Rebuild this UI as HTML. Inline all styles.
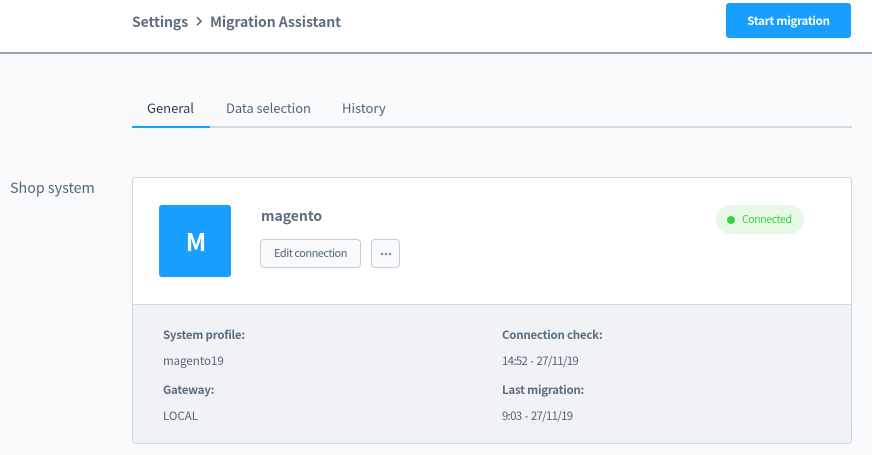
<!DOCTYPE html>
<html lang="en">
<head>
<meta charset="utf-8">
<title>Migration Assistant</title>
<style>
html,body{margin:0;padding:0;width:872px;height:455px;overflow:hidden;background:#f9fafb;}
body{position:relative;font-family:"Noto Sans CJK JP","Liberation Sans",sans-serif;color:#52667a;}
div,span{position:absolute;box-sizing:border-box;white-space:nowrap;}
.t{line-height:20px;height:20px;}
.b{font-weight:700;color:#5b6d80;}
.k{font-size:11.5px;font-weight:700;color:#5b6d80;letter-spacing:-.24px;}
.v{font-size:11.5px;font-weight:400;color:#52667a;}
</style>
</head>
<body>
<div style="left:0;top:0;width:872px;height:54px;background:#fff;border-bottom:2px solid #9aa6b3;"></div>
<div class="t b" style="left:132px;top:12px;font-size:14px;letter-spacing:-.08px;">Settings</div>
<svg style="position:absolute;left:195px;top:16px" width="8" height="11" viewBox="0 0 8 11"><path d="M2 1.2 L6 5.2 L2 9.2" fill="none" stroke="#52667a" stroke-width="1.5"/></svg>
<div class="t b" style="left:210px;top:12px;font-size:14px;letter-spacing:-.05px;">Migration Assistant</div>
<div style="left:726px;top:3px;width:125px;height:35px;background:#189eff;border-radius:3px;"></div>
<div class="t b" style="left:726px;top:11px;width:125px;text-align:center;font-size:11.5px;color:#fff;letter-spacing:-.25px;">Start migration</div>

<div class="t" style="left:147px;top:98px;font-size:13px;color:#2f3f50;">General</div>
<div class="t" style="left:226px;top:98px;font-size:13px;letter-spacing:-.07px;">Data selection</div>
<div class="t" style="left:342px;top:98px;font-size:13px;">History</div>
<div style="left:132px;top:126px;width:720px;height:2px;background:#d1d9e0;"></div>
<div style="left:132px;top:126px;width:78px;height:2px;background:#189eff;"></div>

<div class="t" style="left:10px;top:178px;font-size:14.3px;">Shop system</div>

<div style="left:132px;top:177px;width:720px;height:267px;background:#fff;border:1px solid #d1d9e0;border-radius:3px;"></div>
<div style="left:133px;top:304px;width:718px;height:139px;background:#f0f2f5;border-top:1px solid #d1d9e0;border-radius:0 0 3px 3px;"></div>

<div style="left:159px;top:205px;width:72px;height:72px;background:#189eff;border-radius:3px;"></div>
<div style="left:159px;top:226px;width:74px;height:30px;line-height:30px;text-align:center;font-size:24px;font-weight:700;color:#fff;">M</div>

<div class="t b" style="left:261px;top:206px;font-size:14px;letter-spacing:-.03px;">magento</div>
<div style="left:260px;top:239px;width:101px;height:29px;background:#f9fafb;border:1px solid #c4ced8;border-radius:4px;"></div>
<div class="t" style="left:260px;top:243px;width:101px;text-align:center;font-size:11px;letter-spacing:-.5px;">Edit connection</div>
<div style="left:371px;top:239px;width:29px;height:29px;background:#f9fafb;border:1px solid #c4ced8;border-radius:4px;"></div>
<svg style="position:absolute;left:380px;top:252px" width="13" height="4" viewBox="0 0 13 4"><circle cx="2" cy="2" r="1.3" fill="#8795a3"/><circle cx="6" cy="2" r="1.3" fill="#8795a3"/><circle cx="10" cy="2" r="1.3" fill="#8795a3"/></svg>

<div style="left:716px;top:205px;width:88px;height:29px;background:#e7f8e7;border-radius:15px;"></div>
<div style="left:727px;top:215.5px;width:8px;height:8px;background:#37d046;border-radius:50%;"></div>
<div class="t" style="left:742px;top:210px;font-size:10.5px;letter-spacing:-.4px;color:#37d046;">Connected</div>

<div class="t k" style="left:163px;top:325px;">System profile:</div>
<div class="t v" style="left:163px;top:351px;">magento19</div>
<div class="t k" style="left:163px;top:380px;">Gateway:</div>
<div class="t v" style="left:163px;top:406px;">LOCAL</div>

<div class="t k" style="left:502px;top:325px;">Connection check:</div>
<div class="t v" style="left:502px;top:351px;letter-spacing:-.72px;word-spacing:1.2px;">14:52 - 27/11/19</div>
<div class="t k" style="left:502px;top:380px;">Last migration:</div>
<div class="t v" style="left:502px;top:406px;letter-spacing:-.72px;word-spacing:1.2px;">9:03 - 27/11/19</div>
</body>
</html>
